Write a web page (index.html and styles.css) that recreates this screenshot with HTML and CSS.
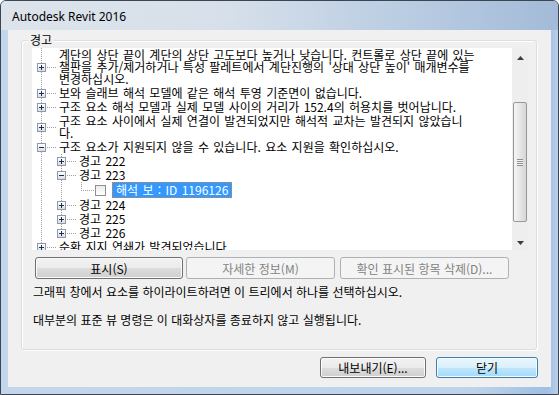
FILE: index.html
```html
<!DOCTYPE html>
<html lang="ko">
<head>
    <meta charset="UTF-8">
    <title>Autodesk Revit 2016</title>
    <link rel="stylesheet" href="styles.css">
</head>
<body>

<div class="window">
    <div class="titlebar">Autodesk Revit 2016</div>

    <div class="client">
        <div class="group">
            <span class="group-title">경고</span>

            <div class="listbox">
                <div class="tree">
                    <div class="row">
                        <span class="node full"><i class="exp plus"></i></span>
                        <span class="label">계단의 상단 끝이 계단의 상단 고도보다 높거나 낮습니다. 컨트롤로 상단 끝에 있는<br>챌판을 추가/제거하거나 특성 팔레트에서 계단진행의 '상대 상단 높이' 매개변수를<br>변경하십시오.</span>
                    </div>
                    <div class="row">
                        <span class="node full"><i class="exp plus"></i></span>
                        <span class="label">보와 슬래브 해석 모델에 같은 해석 투영 기준면이 없습니다.</span>
                    </div>
                    <div class="row">
                        <span class="node full"><i class="exp plus"></i></span>
                        <span class="label">구조 요소 해석 모델과 실제 모델 사이의 거리가 152.4의 허용치를 벗어납니다.</span>
                    </div>
                    <div class="row">
                        <span class="node full"><i class="exp plus"></i></span>
                        <span class="label">구조 요소 사이에서 실제 연결이 발견되었지만 해석적 교차는 발견되지 않았습니<br>다.</span>
                    </div>
                    <div class="row">
                        <span class="node full"><i class="exp minus"></i></span>
                        <span class="label">구조 요소가 지원되지 않을 수 있습니다. 요소 지원을 확인하십시오.</span>
                    </div>
                    <div class="row">
                        <span class="indent"></span>
                        <span class="node full"><i class="exp plus"></i></span>
                        <span class="label">경고 222</span>
                    </div>
                    <div class="row">
                        <span class="indent"></span>
                        <span class="node full"><i class="exp minus"></i></span>
                        <span class="label">경고 223</span>
                    </div>
                    <div class="row">
                        <span class="indent"></span>
                        <span class="indent"></span>
                        <span class="node half leaf"><i class="check"></i></span>
                        <span class="label selected">해석 보 : ID 1196126</span>
                    </div>
                    <div class="row">
                        <span class="indent"></span>
                        <span class="node full"><i class="exp plus"></i></span>
                        <span class="label">경고 224</span>
                    </div>
                    <div class="row">
                        <span class="indent"></span>
                        <span class="node full"><i class="exp plus"></i></span>
                        <span class="label">경고 225</span>
                    </div>
                    <div class="row">
                        <span class="indent"></span>
                        <span class="node half"><i class="exp plus"></i></span>
                        <span class="label">경고 226</span>
                    </div>
                    <div class="row">
                        <span class="node full"><i class="exp plus"></i></span>
                        <span class="label">순환 지지 연쇄가 발견되었습니다.</span>
                    </div>
                </div>

                <div class="scrollbar">
                    <div class="arrow">
                        <svg width="7" height="4" viewBox="0 0 7 4"><polygon points="0,4 3.5,0 7,4" fill="#3c3c3c"/></svg>
                    </div>
                    <div class="track">
                        <div class="thumb"><span class="grip"></span></div>
                    </div>
                    <div class="arrow">
                        <svg width="7" height="4" viewBox="0 0 7 4"><polygon points="0,0 7,0 3.5,4" fill="#3c3c3c"/></svg>
                    </div>
                </div>
            </div>

            <div class="actions">
                <button class="btn show">표시(S)</button>
                <button class="btn more" disabled>자세한 정보(M)</button>
                <button class="btn remove" disabled>확인 표시된 항목 삭제(D)...</button>
            </div>

            <p class="hint">그래픽 창에서 요소를 하이라이트하려면 이 트리에서 하나를 선택하십시오.</p>
            <p class="hint gap">대부분의 표준 뷰 명령은 이 대화상자를 종료하지 않고 실행됩니다.</p>
        </div>

        <div class="footer">
            <button class="btn export">내보내기(E)...</button>
            <button class="btn close default">닫기</button>
        </div>
    </div>
</div>

</body>
</html>
```

FILE: styles.css
```css
body {
    margin: 0;
    background-color: #ffffff;
    font-family: "Noto Sans CJK KR", "Noto Sans", sans-serif;
    font-size: 12px;
    color: #000;
}
.window {
    width: 559px;
    height: 395px;
    box-sizing: border-box;
    border: 1px solid #3b4652;
    border-radius: 6px 6px 0 0;
    padding: 0 7px 7px 7px;
    background: linear-gradient(to right, #c3d6ec 0%, #bed3ea 85%, #9fbfe4 98%, #b9cfe8 100%);
    overflow: hidden;
}
.titlebar {
    height: 29px;
    margin: 0 -7px;
    padding-left: 11px;
    display: flex;
    align-items: center;
    padding-top: 1px;
    box-sizing: border-box;
    font-family: "Noto Sans", sans-serif;
    font-size: 12px;
    background: linear-gradient(to right, #dce3eb 0%, #d7e0ea 40%, #bccee3 70%, #a3bbd8 100%);
}
.client {
    height: 357px;
    background-color: #f0f0f0;
    padding-top: 10px;
    box-sizing: border-box;
}
.group {
    position: relative;
    margin-left: 13px;
    width: 516px;
    height: 310px;
    box-sizing: border-box;
    border: 1px solid #d5dfe5;
    border-radius: 3px;
    box-shadow: inset 1px 1px 0 #ffffff, 1px 1px 0 #ffffff;
    padding: 7px 8px 0 10px;
}
.group-title {
    position: absolute;
    top: -8px;
    left: 6px;
    padding: 0 2px;
    line-height: 14px;
    background-color: #f0f0f0;
}
.listbox {
    display: flex;
    width: 496px;
    height: 202px;
    background-color: #ffffff;
}
.tree {
    flex: 1;
    overflow: hidden;
    white-space: nowrap;
    word-spacing: 1px;
}
.row {
    display: flex;
    line-height: 12px;
}
.indent {
    flex: none;
    width: 20px;
    background: repeating-linear-gradient(to bottom, #a0a0a0 0 1px, transparent 1px 2px) 9px 0 / 1px 100% no-repeat;
}
.node {
    flex: none;
    width: 25px;
    box-sizing: border-box;
    padding-left: 5px;
    display: flex;
    align-items: center;
}
.node.full {
    background:
        repeating-linear-gradient(to right, #a0a0a0 0 1px, transparent 1px 2px) 9px 50% / 16px 1px no-repeat,
        repeating-linear-gradient(to bottom, #a0a0a0 0 1px, transparent 1px 2px) 9px 0 / 1px 100% no-repeat;
}
.node.half {
    background:
        repeating-linear-gradient(to right, #a0a0a0 0 1px, transparent 1px 2px) 9px 50% / 16px 1px no-repeat,
        repeating-linear-gradient(to bottom, #a0a0a0 0 1px, transparent 1px 2px) 9px 0 / 1px 50% no-repeat;
}
.node.leaf {
    width: 40px;
    padding-left: 23px;
    background:
        repeating-linear-gradient(to right, #a0a0a0 0 1px, transparent 1px 2px) 9px 50% / 14px 1px no-repeat,
        repeating-linear-gradient(to bottom, #a0a0a0 0 1px, transparent 1px 2px) 9px 0 / 1px 50% no-repeat;
}
.exp {
    width: 9px;
    height: 9px;
    box-sizing: border-box;
    border: 1px solid #8e9aa8;
    background: linear-gradient(#ffffff, #d9dee6);
}
.exp.plus {
    background:
        linear-gradient(#1c2f4c, #1c2f4c) center / 5px 1px no-repeat,
        linear-gradient(#1c2f4c, #1c2f4c) center / 1px 5px no-repeat,
        linear-gradient(#ffffff, #d9dee6);
}
.exp.minus {
    background:
        linear-gradient(#1c2f4c, #1c2f4c) center / 5px 1px no-repeat,
        linear-gradient(#ffffff, #d9dee6);
}
.check {
    width: 11px;
    height: 11px;
    box-sizing: border-box;
    border: 1px solid #8f8f8f;
    background: linear-gradient(#ececec, #ffffff);
}
.label {
    padding: 1px 2px;
}
.label.selected {
    padding: 1px 3px;
    border: 1px dotted #d9823a;
    background-color: #3399ff;
    color: #ffffff;
}
.scrollbar {
    flex: none;
    width: 16px;
    display: flex;
    flex-direction: column;
    background-color: #eeeeee;
}
.arrow {
    height: 17px;
    display: flex;
    justify-content: center;
    align-items: center;
    padding-top: 3px;
    box-sizing: border-box;
}
.track {
    flex: 1;
}
.thumb {
    margin: 37px 1px 0 1px;
    height: 120px;
    box-sizing: border-box;
    border: 1px solid #979797;
    border-radius: 2px;
    background: linear-gradient(to right, #f5f5f5, #e6e6e6 50%, #d6d6d6);
    display: flex;
    align-items: center;
    justify-content: center;
}
.grip {
    width: 6px;
    height: 7px;
    background: repeating-linear-gradient(to bottom, #8d8d8d 0 1px, #f6f6f6 1px 2px);
}
.actions {
    display: flex;
    margin-top: 7px;
    padding-left: 3px;
}
.btn {
    height: 22px;
    padding: 0;
    box-sizing: border-box;
    border: 1px solid #707070;
    border-radius: 3px;
    background: linear-gradient(#f2f2f2 0%, #ebebeb 50%, #dddddd 51%, #cfcfcf 100%);
    box-shadow: inset 0 0 0 1px #fbfbfb;
    font-family: "Noto Sans CJK KR", "Noto Sans", sans-serif;
    font-size: 12px;
    color: #000;
}
.btn:disabled {
    border-color: #adb2b5;
    background: #f4f4f4;
    box-shadow: none;
    color: #838383;
}
.show {
    width: 148px;
}
.more {
    width: 149px;
    margin-left: 3px;
}
.remove {
    width: 169px;
    margin-left: 5px;
}
.hint {
    margin: 6px 0 0 1px;
    line-height: 14px;
}
.hint.gap {
    margin-top: 14px;
}
.footer {
    display: flex;
    justify-content: flex-end;
    gap: 10px;
    margin-top: 7px;
    padding-right: 13px;
}
.footer .btn {
    height: 21px;
}
.export {
    width: 106px;
}
.close {
    width: 102px;
}
.btn.default {
    border-color: #3c7fb1;
    background: linear-gradient(#eaf6fd 0%, #d9f0fc 50%, #bee6fd 51%, #a7d9f5 100%);
    box-shadow: inset 0 0 0 1px #f4fbfe;
}
```
